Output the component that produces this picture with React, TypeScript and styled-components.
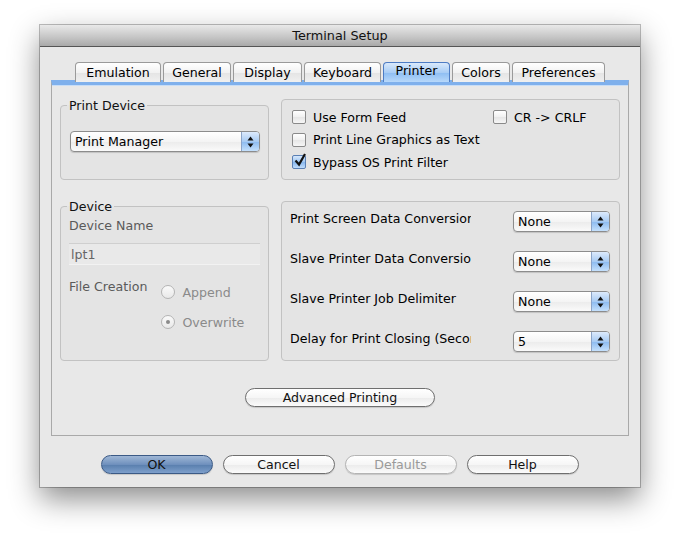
import React from 'react';
import styled, { createGlobalStyle } from 'styled-components';

const FS = '12.6px';

const GlobalStyle = createGlobalStyle`
	body {
		margin: 0;
		background: #ffffff;
		font-family: 'DejaVu Sans', 'Liberation Sans', sans-serif;
		font-size: ${FS};
		color: #000;
	}
`;

const tabs = [
	{ label: 'Emulation', w: 86 },
	{ label: 'General', w: 68 },
	{ label: 'Display', w: 69 },
	{ label: 'Keyboard', w: 77 },
	{ label: 'Printer', w: 67, active: true },
	{ label: 'Colors', w: 58 },
	{ label: 'Preferences', w: 93 },
];

const conversions = [
	{ label: 'Print Screen Data Conversion', value: 'None' },
	{ label: 'Slave Printer Data Conversion', value: 'None' },
	{ label: 'Slave Printer Job Delimiter', value: 'None' },
	{ label: 'Delay for Print Closing (Seconds)', value: '5' },
];

const Arrows = () => (
	<svg width="7" height="12" viewBox="0 0 7 12">
		<path d="M3.5 0.5 L6.5 4.5 L0.5 4.5 Z" fill="#111" />
		<path d="M3.5 11.5 L6.5 7.5 L0.5 7.5 Z" fill="#111" />
	</svg>
);

const Popup = ({ value, width }: { value: string; width: number }) => (
	<PopupBox style={{ width }}>
		<PopupText>{value}</PopupText>
		<PopupArrow>
			<Arrows />
		</PopupArrow>
	</PopupBox>
);

const Check = ({ checked, label }: { checked?: boolean; label: string }) => (
	<CheckRow>
		<CheckBox checked={checked}>
			{checked && (
				<svg width="14" height="15" viewBox="0 0 14 15">
					<path d="M2.5 7.5 L6 11.5 L12 1" fill="none" stroke="#111" strokeWidth="2.2" />
				</svg>
			)}
		</CheckBox>
		{label}
	</CheckRow>
);

const App = () => {
	return (
		<Page>
			<GlobalStyle />
			<Window>
				<TitleBar>Terminal Setup</TitleBar>
				<Body>
					<TabRow>
						{tabs.map((t) => (
							<Tab key={t.label} w={t.w} active={t.active}>
								{t.label}
							</Tab>
						))}
					</TabRow>
					<Panel>
						<Grid>
							<Group>
								<Legend>Print Device</Legend>
								<PrintDeviceInner>
									<Popup value="Print Manager" width={190} />
								</PrintDeviceInner>
							</Group>
							<Box offset={1}>
								<CheckGrid>
									<Check label="Use Form Feed" />
									<Check label="CR -> CRLF" />
									<Check label="Print Line Graphics as Text" />
									<span />
									<Check checked label="Bypass OS Print Filter" />
								</CheckGrid>
							</Box>
							<Group>
								<Legend>Device</Legend>
								<DeviceInner>
									<FieldLabel>Device Name</FieldLabel>
									<TextField>lpt1</TextField>
									<FileRow>
										<FieldLabel>File Creation</FieldLabel>
										<RadioList>
											<RadioRow>
												<Radio />
												Append
											</RadioRow>
											<RadioRow>
												<Radio checked />
												Overwrite
											</RadioRow>
										</RadioList>
									</FileRow>
								</DeviceInner>
							</Group>
							<Box offset={2}>
								<ConvList>
									{conversions.map((c) => (
										<ConvRow key={c.label}>
											<ConvLabel>{c.label}</ConvLabel>
											<Popup value={c.value} width={97} />
										</ConvRow>
									))}
								</ConvList>
							</Box>
						</Grid>
						<Center>
							<Button w={190}>Advanced Printing</Button>
						</Center>
					</Panel>
					<ButtonRow>
						<Button w={112} primary>
							OK
						</Button>
						<Button w={112}>Cancel</Button>
						<Button w={112} disabled>
							Defaults
						</Button>
						<Button w={112}>Help</Button>
					</ButtonRow>
				</Body>
			</Window>
		</Page>
	);
};

const Page = styled.div`
	padding: 25px 0 0 40px;
	height: 517px;
`;

const Window = styled.div`
	width: 600px;
	height: 462px;
	display: flex;
	flex-direction: column;
	background: #e8e8e8;
	box-shadow: 0 0 0 1px rgba(0, 0, 0, 0.25), 0 12px 28px rgba(0, 0, 0, 0.45);
`;

const TitleBar = styled.div`
	height: 22px;
	line-height: 22px;
	text-align: center;
	font-size: 12.8px;
	color: #111;
	background: linear-gradient(#e9e9e9, #c4c4c4 60%, #a9a9a9);
	border-bottom: 1px solid #555;
	box-sizing: border-box;
`;

const Body = styled.div`
	flex: 1;
	padding: 15px 11px 0;
	display: flex;
	flex-direction: column;
`;

const TabRow = styled.div`
	display: flex;
	justify-content: center;
	gap: 2px;
	height: 18px;
	position: relative;
	z-index: 1;
`;

const Tab = styled.div<{ w: number; active?: boolean }>`
	width: ${(p) => p.w}px;
	height: 20px;
	box-sizing: border-box;
	text-align: center;
	line-height: ${(p) => (p.active ? 16 : 19)}px;
	font-size: ${FS};
	border: 1px solid ${(p) => (p.active ? '#4d7cc4' : '#9a9a9a')};
	border-bottom: none;
	border-radius: 4px 4px 0 0;
	background: ${(p) =>
		p.active
			? 'linear-gradient(#d9e9fb, #a9cdf5 50%, #8dbdf2 51%, #b7d8fa)'
			: 'linear-gradient(#ffffff, #f2f2f2 50%, #e4e4e4 51%, #f0f0f0)'};
`;

const Panel = styled.div`
	height: 356px;
	box-sizing: border-box;
	border: 1px solid #a9a9a9;
	border-top: 5px solid #7fb0ec;
	box-shadow: inset 0 1px 0 #c7ddf7;
	display: flex;
	flex-direction: column;
	padding: 13px 9px 0 8px;
`;

const Grid = styled.div`
	display: grid;
	grid-template-columns: 209px 339px;
	grid-template-rows: 82px 162px;
	column-gap: 12px;
	row-gap: 19px;
`;

const Group = styled.fieldset`
	margin: 0;
	padding: 0;
	min-width: 0;
	box-sizing: border-box;
	border: 1px solid #c2c2c2;
	border-radius: 4px;
	background: #e4e4e4;
`;

const Legend = styled.legend`
	margin-left: 6px;
	padding: 0 2px;
	font-size: ${FS};
	line-height: 15px;
	color: #111;
`;

const Box = styled.div<{ offset: number }>`
	box-sizing: border-box;
	margin-top: ${(p) => p.offset}px;
	border: 1px solid #c2c2c2;
	border-radius: 4px;
	background: #e4e4e4;
`;

const PrintDeviceInner = styled.div`
	padding: 18px 8px 0 9px;
`;

const PopupBox = styled.div`
	height: 21px;
	box-sizing: border-box;
	display: flex;
	border: 1px solid #8c8c8c;
	border-radius: 4px;
	overflow: hidden;
	background: linear-gradient(#ffffff, #f4f4f4 50%, #ebebeb 51%, #fafafa);
	box-shadow: 0 1px 1px rgba(0, 0, 0, 0.15);
`;

const PopupText = styled.div`
	flex: 1;
	padding-left: 4px;
	line-height: 20px;
	font-size: ${FS};
	white-space: nowrap;
	overflow: hidden;
`;

const PopupArrow = styled.div`
	width: 17px;
	display: flex;
	align-items: center;
	justify-content: center;
	border-left: 1px solid #8ba4c8;
	background: linear-gradient(#dceafc, #a8cbf3 50%, #8bbaf0 51%, #c4e0fc);
`;

const CheckGrid = styled.div`
	display: grid;
	grid-template-columns: 201px auto;
	row-gap: 7.5px;
	padding: 9.5px 0 0 10px;
`;

const CheckRow = styled.div`
	display: flex;
	align-items: center;
	gap: 7px;
	font-size: ${FS};
	height: 15px;
	white-space: nowrap;
`;

const CheckBox = styled.div<{ checked?: boolean }>`
	width: 14px;
	height: 14px;
	box-sizing: border-box;
	border: 1px solid ${(p) => (p.checked ? '#5a7fb4' : '#8a8a8a')};
	border-radius: 2px;
	background: ${(p) =>
		p.checked
			? 'linear-gradient(#d6e7fb, #9fc6f2 50%, #86b6ee 51%, #c0dcfb)'
			: 'linear-gradient(#ffffff, #f0f0f0 50%, #e6e6e6 51%, #f6f6f6)'};
	display: flex;
	align-items: center;
	justify-content: center;
	svg {
		margin-top: -4px;
		margin-left: 1px;
		flex-shrink: 0;
	}
`;

const DeviceInner = styled.div`
	padding: 4px 8px 0 8px;
	display: flex;
	flex-direction: column;
`;

const FieldLabel = styled.div`
	font-size: ${FS};
	color: #5a5a5a;
	line-height: 15px;
`;

const TextField = styled.div`
	margin-top: 10px;
	height: 22px;
	box-sizing: border-box;
	border-top: 1px solid #cfcfcf;
	border-bottom: 1px solid #f2f2f2;
	background: #e9e9e9;
	padding-left: 2px;
	line-height: 21px;
	font-size: ${FS};
	color: #666;
`;

const FileRow = styled.div`
	display: flex;
	margin-top: 14px;
	gap: 14px;
`;

const RadioList = styled.div`
	display: flex;
	flex-direction: column;
	gap: 12px;
	padding-top: 4px;
`;

const RadioRow = styled.div`
	display: flex;
	align-items: center;
	gap: 7px;
	font-size: ${FS};
	color: #8a8a8a;
	height: 18px;
`;

const Radio = styled.div<{ checked?: boolean }>`
	width: 14px;
	height: 14px;
	box-sizing: border-box;
	border-radius: 50%;
	border: 1px solid #b4b4b4;
	background: linear-gradient(#fafafa, #e8e8e8);
	display: flex;
	align-items: center;
	justify-content: center;
	&::after {
		content: '';
		width: 4px;
		height: 4px;
		border-radius: 50%;
		background: ${(p) => (p.checked ? '#8a8a8a' : 'transparent')};
	}
`;

const ConvList = styled.div`
	display: flex;
	flex-direction: column;
	gap: 19px;
	padding: 9px 9px 0 8px;
`;

const ConvRow = styled.div`
	display: flex;
	align-items: center;
	justify-content: space-between;
`;

const ConvLabel = styled.div`
	width: 181px;
	overflow: hidden;
	white-space: nowrap;
	font-size: ${FS};
	margin-top: -6px;
`;

const Center = styled.div`
	display: flex;
	justify-content: center;
	margin-top: 27px;
	padding-left: 1px;
`;

const Button = styled.div<{ w: number; primary?: boolean; disabled?: boolean }>`
	width: ${(p) => p.w}px;
	height: 19px;
	box-sizing: border-box;
	border-radius: 10px;
	text-align: center;
	line-height: 17px;
	font-size: ${FS};
	color: ${(p) => (p.disabled ? '#9a9a9a' : '#111')};
	border: 1px solid
		${(p) => (p.primary ? '#3b5a86' : p.disabled ? '#b4b4b4' : '#6f6f6f')};
	background: ${(p) =>
		p.primary
			? 'linear-gradient(#9fb7d6, #6f90bd 50%, #587ead 51%, #7e9fcb)'
			: 'linear-gradient(#ffffff, #f6f6f6 50%, #ebebeb 51%, #fbfbfb)'};
	box-shadow: 0 1px 1px rgba(0, 0, 0, 0.15);
`;

const ButtonRow = styled.div`
	display: flex;
	justify-content: center;
	gap: 10px;
	margin-top: 19px;
	padding-right: 1px;
`;

export default App;
